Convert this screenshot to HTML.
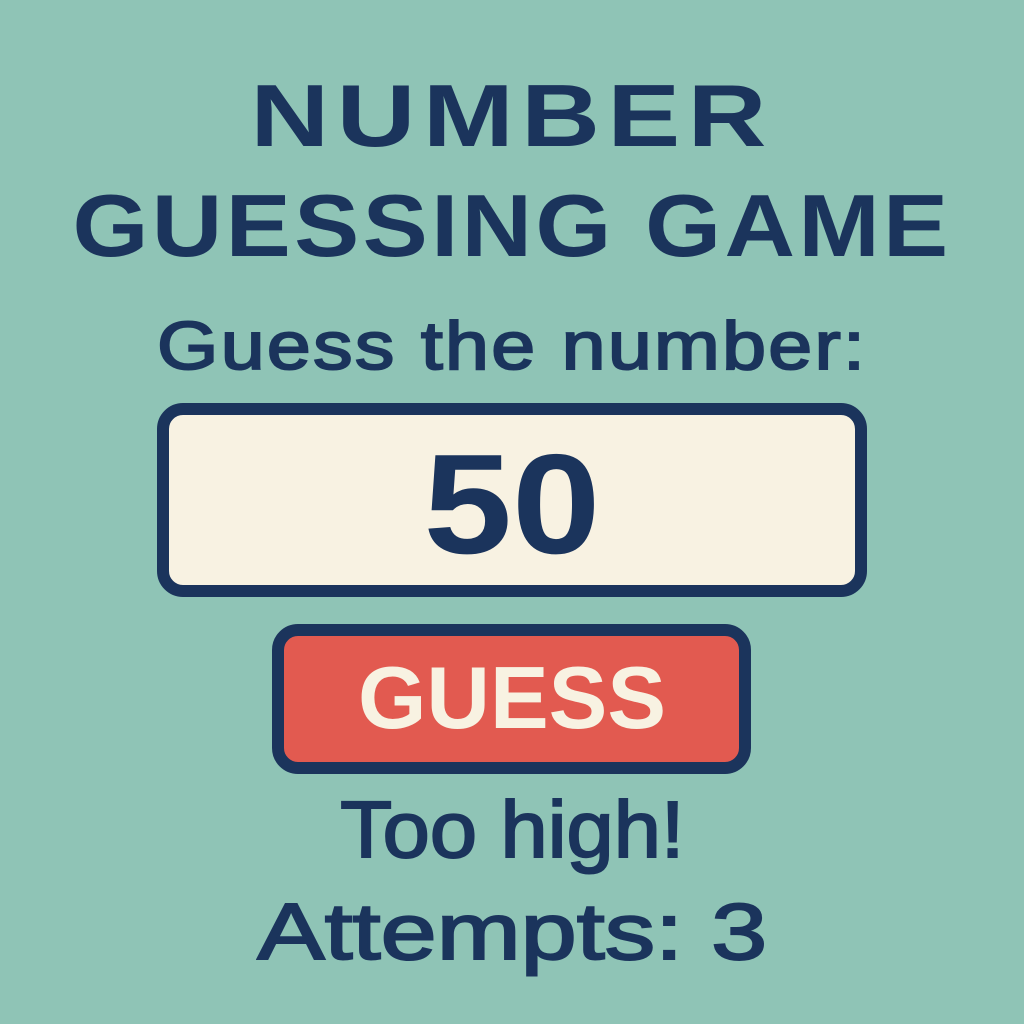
<!DOCTYPE html>
<html><head><meta charset="utf-8"><style>
html,body{margin:0;padding:0}
body{width:1024px;height:1024px;background:#8fc4b6;position:relative;overflow:hidden;font-family:"Liberation Sans","DejaVu Sans",sans-serif;color:#1b345c;font-weight:bold}
.t{position:absolute;left:0;width:1024px;text-align:center;white-space:nowrap;line-height:1}
.t span{display:inline-block}
.box{position:absolute;box-sizing:border-box;border:12px solid #1b345c;border-radius:26px}
</style></head><body>
<div class="t" style="top:72px;font-size:88px;letter-spacing:6px"><span style="transform:scaleX(1.24)">NUMBER</span></div>
<div class="t" style="top:182px;font-size:88px;letter-spacing:3px"><span style="transform:scaleX(1.11)">GUESSING GAME</span></div>
<div class="t" style="top:312px;font-size:68px;font-weight:normal;letter-spacing:2px;-webkit-text-stroke:2px #1b345c"><span style="transform:scaleX(1.16)">Guess the number:</span></div>
<div class="box" style="left:157px;top:403px;width:710px;height:194px;background:#f8f2e2"></div>
<div class="t" style="top:434px;font-size:142px"><span style="transform:scaleX(1.12)">50</span></div>
<div class="box" style="left:272px;top:624px;width:479px;height:150px;background:#e25a50"></div>
<div class="t" style="top:654px;font-size:88px;color:#f8f2e2"><span>GUESS</span></div>
<div class="t" style="top:790px;font-size:80px;font-weight:normal;-webkit-text-stroke:2px #1b345c"><span style="transform:scaleX(1.06)">Too high!</span></div>
<div class="t" style="top:892px;font-size:80px;font-weight:normal;-webkit-text-stroke:2px #1b345c"><span style="transform:scaleX(1.26)">Attempts: 3</span></div>
</body></html>
